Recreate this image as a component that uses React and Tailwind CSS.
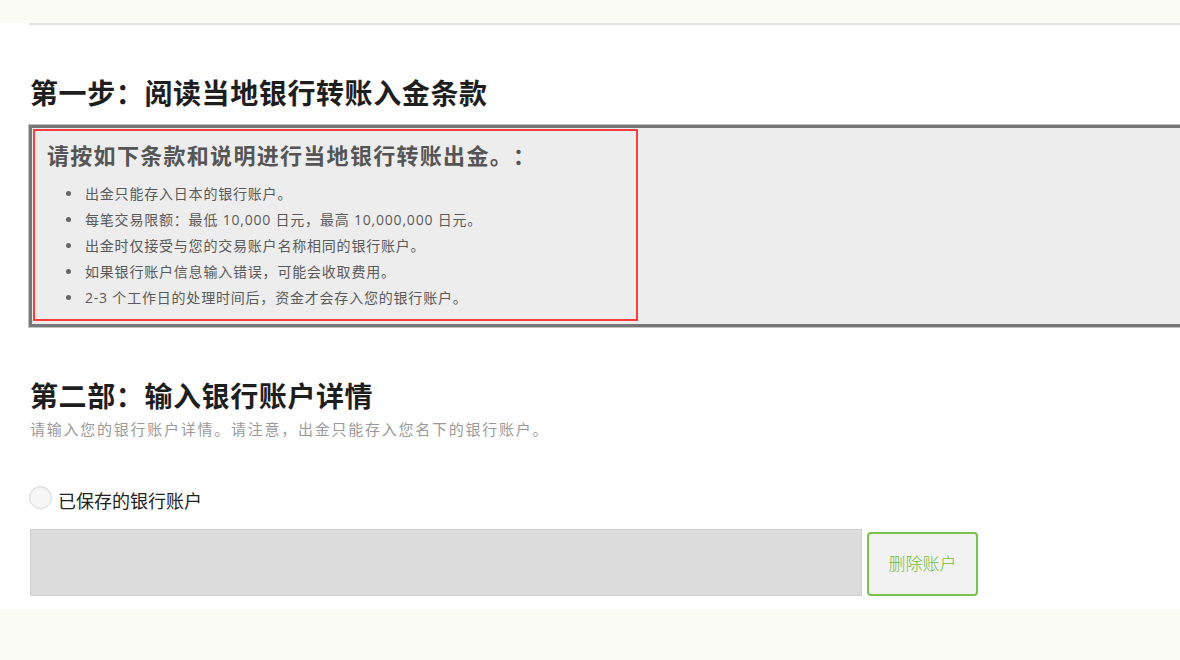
const terms = [
    "出金只能存入日本的银行账户。",
    "每笔交易限额：最低 10,000 日元，最高 10,000,000 日元。",
    "出金时仅接受与您的交易账户名称相同的银行账户。",
    "如果银行账户信息输入错误，可能会收取费用。",
    "2-3 个工作日的处理时间后，资金才会存入您的银行账户。",
];

const App = () => {
    return (
        <div className="h-[660px] w-[1180px] overflow-hidden bg-[#fbfbf5] flex flex-col [text-spacing-trim:space-all]"
             style={{fontFamily: '"Open Sans", "Noto Sans CJK SC", sans-serif'}}>
            <div className="h-[23px] shrink-0"/>
            <div className="h-[586px] bg-white shrink-0">
                <div className="ml-[29px] border-t-2 border-[#e4e4e4]"/>
                <div className="pl-[29px]">
                    <h2 className="mt-[48px] pl-[1px] text-[28px] leading-[40px] font-bold tracking-[0.6px] text-[#1e1e1e]">
                        第一步：阅读当地银行转账入金条款
                    </h2>
                    <div className="mt-[12px] border-y-[3px] border-l-[3px] border-[#777777] bg-[#ededed] pt-[1px] pb-[3px] shadow-[0_0_0_1px_#c2c2c2]">
                        <div className="ml-[1px] w-[605px] h-[192px] border-2 border-[#ff3b3b] pl-[12px] pt-[8px]">
                            <h3 className="text-[22px] leading-[32px] font-bold tracking-[1.3px] text-[#555555]">
                                请按如下条款和说明进行当地银行转账出金。：
                            </h3>
                            <ul className="mt-[9px] pl-[19px]">
                                {terms.map((t) => (
                                    <li key={t} className="flex items-center h-[26px] text-[14px] tracking-[0.8px] text-[#5a5a5a]">
                                        <span className="w-[5px] h-[5px] rounded-full bg-[#666666] mr-[14px] shrink-0"/>
                                        {t}
                                    </li>
                                ))}
                            </ul>
                        </div>
                    </div>
                    <h2 className="mt-[49px] pl-[1px] text-[28px] leading-[40px] font-bold tracking-[0.6px] text-[#1e1e1e]">
                        第二部：输入银行账户详情
                    </h2>
                    <p className="mt-[1px] pl-[1px] text-[15px] leading-[24px] tracking-[1.75px] text-[#9a9a9a]">
                        请输入您的银行账户详情。请注意，出金只能存入您名下的银行账户。
                    </p>
                    <label className="mt-[46px] flex items-center h-[28px]">
                        <span className="w-[23px] h-[23px] rounded-full border border-[#d8d8d8] bg-[#f6f6f6] shadow-[inset_0_1px_2px_rgba(0,0,0,0.05)] shrink-0 mt-[-8px]"/>
                        <span className="ml-[6px] text-[18px] text-[#222222]">已保存的银行账户</span>
                    </label>
                    <div className="mt-[14px] flex items-start">
                        <div className="ml-[1px] w-[832px] h-[67px] bg-[#dcdcdc] border border-[#cfcfcf]"/>
                        <button className="ml-[5px] mt-[3px] w-[111px] h-[64px] rounded-[4px] border-2 border-[#7cc24a] bg-[#f2f2f2] text-[17px] text-[#6fbf3c] font-light">
                            删除账户
                        </button>
                    </div>
                </div>
            </div>
        </div>
    );
};

export default App;
